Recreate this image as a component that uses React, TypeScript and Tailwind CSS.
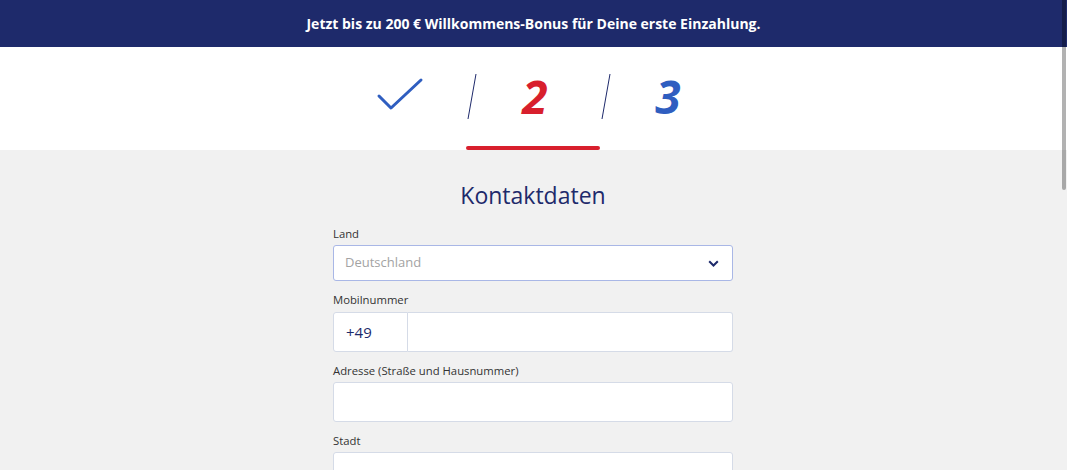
const font = { fontFamily: '"Open Sans", "Noto Sans", sans-serif' };

function Field({ label, gap = 3, children }: { label: string; gap?: number; children: React.ReactNode }) {
  return (
    <div className="flex flex-col">
      <label className="text-[11.3px] leading-[16px] text-[#333]" style={{ marginBottom: gap }}>
        {label}
      </label>
      {children}
    </div>
  );
}

function Step({ children, active, slash }: { children: React.ReactNode; active?: boolean; slash?: boolean }) {
  return (
    <div className="relative flex items-center justify-center pb-[6px]">
      {slash && (
        <svg className="absolute left-0 top-[27px]" width="12" height="46" viewBox="0 0 12 46">
          <line x1="10" y1="0" x2="2" y2="45" stroke="#1e2a6b" strokeWidth="1" />
        </svg>
      )}
      {children}
      {active && <div className="absolute left-0 right-0 bottom-0 h-[4px] rounded-full bg-[#d81f2d]" />}
    </div>
  );
}

export default function App() {
  return (
    <div className="relative min-h-[470px] bg-[#f1f1f1] overflow-hidden" style={font}>
      <div className="h-[47px] bg-[#1e2a6b] flex items-center justify-center">
        <span className="text-white font-bold text-[14px]">
          Jetzt bis zu 200 € Willkommens-Bonus für Deine erste Einzahlung.
        </span>
      </div>

      <div className="h-[103px] bg-white flex justify-center pr-px">
        <div className="w-[400px] grid grid-cols-3">
          <Step>
            <svg width="48" height="38" viewBox="0 0 48 38">
              <polyline points="3,19 15,31 45,3" fill="none" stroke="#2f5ec0" strokeWidth="3" strokeLinecap="round" strokeLinejoin="round" />
            </svg>
          </Step>
          <Step active slash>
            <span className="text-[46px] leading-none font-bold italic text-[#d81f2d] ml-[4px]">2</span>
          </Step>
          <Step slash>
            <span className="text-[46px] leading-none font-bold italic text-[#2f5ec0] ml-[3px]">3</span>
          </Step>
        </div>
      </div>

      <div className="flex flex-col items-center pt-[30px] pr-px">
        <h1 className="text-[23px] leading-[30px] font-medium text-[#1e2a6b]">Kontaktdaten</h1>
        <div className="w-[400px] mt-[16px] flex flex-col gap-[11px]">
          <Field label="Land">
            <div className="h-[36px] bg-white border border-[#a9b7e6] rounded-[3px] flex items-center justify-between pl-[11px] pr-[13px]">
              <span className="text-[13px] text-[#a3a3a3]">Deutschland</span>
              <svg width="11" height="7" viewBox="0 0 11 7">
                <polyline points="1.2,1.2 5.5,5.5 9.8,1.2" fill="none" stroke="#1e2a6b" strokeWidth="2" />
              </svg>
            </div>
          </Field>
          <Field label="Mobilnummer" gap={4}>
            <div className="h-[40px] flex">
              <div className="w-[75px] bg-white border border-[#d5dbe7] rounded-l-[3px] flex items-center pl-[12px] text-[15px] text-[#1e2a6b]">
                +49
              </div>
              <div className="flex-1 bg-white border border-l-0 border-[#d5dbe7] rounded-r-[3px]" />
            </div>
          </Field>
          <Field label="Adresse (Straße und Hausnummer)">
            <div className="h-[40px] bg-white border border-[#d5dbe7] rounded-[3px]" />
          </Field>
          <Field label="Stadt">
            <div className="h-[40px] bg-white border border-[#d5dbe7] rounded-[3px]" />
          </Field>
        </div>
      </div>

      <div className="absolute right-[1px] top-0 w-[4px] h-[190px] rounded-b-[2px] bg-black/30" />
    </div>
  );
}
